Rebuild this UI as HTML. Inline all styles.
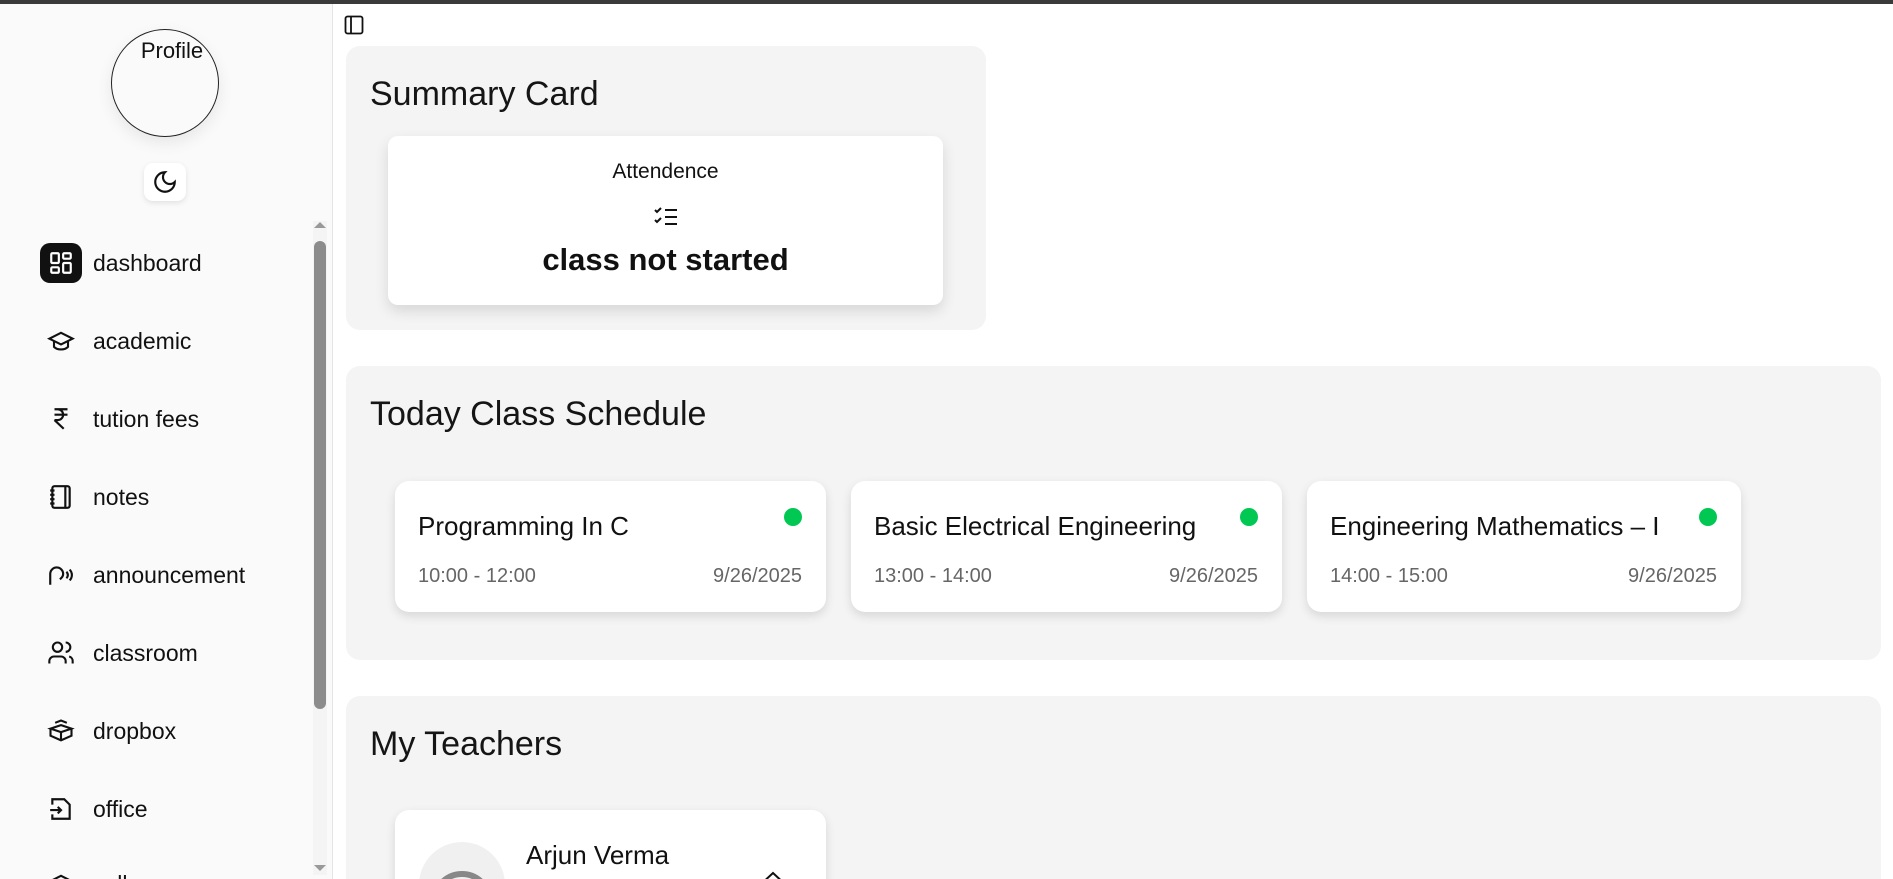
<!DOCTYPE html>
<html style="width:1893px;height:879px;overflow:hidden"><head><meta charset="utf-8"><style>
*{box-sizing:border-box;margin:0;padding:0}
body{width:1893px;height:879px;overflow:hidden;background:#fff;font-family:"Liberation Sans",sans-serif;color:#111;position:relative}
.topbar{position:absolute;left:0;top:0;width:1893px;height:4px;background:#3a3a3a}
.side{position:absolute;left:0;top:4px;width:333px;height:875px;background:#fafafa;border-right:1px solid #e4e4e4;overflow:hidden}
.avatar{position:absolute;left:111px;top:25px;width:108px;height:108px;border-radius:50%;border:1px solid #222;box-shadow:0 6px 16px rgba(0,0,0,.08);font-size:22px;text-align:center;padding-top:8px;padding-left:14px}
.moon{position:absolute;left:144px;top:159px;width:42px;height:38px;border-radius:9px;background:#fff;box-shadow:0 2px 6px rgba(0,0,0,.1);display:flex;align-items:center;justify-content:center}
.nav{position:absolute;left:40px;top:0}
.item{position:absolute;left:0;height:40px;display:flex;align-items:center;font-size:23px;font-weight:500;white-space:nowrap}
.item .ic{width:42px;height:40px;display:flex;align-items:center;justify-content:center;margin-right:11px}
.sb{position:absolute;left:313px;width:14px;height:654px;background:#f4f4f4}
.thumb{position:absolute;left:314px;width:12px;height:468px;border-radius:6px;background:#8c8c8c}
.panel{position:absolute;background:#f4f4f4;border-radius:14px;overflow:hidden}
h2{position:absolute;font-size:34px;font-weight:500;color:#151515}
.card{position:absolute;background:#fff;border-radius:14px;box-shadow:0 4px 10px rgba(0,0,0,.12)}
.sc .t{position:absolute;left:23px;top:30px;font-size:26px;font-weight:500}
.sc .d{position:absolute;right:24px;top:27px;width:18px;height:18px;border-radius:50%;background:#00c853}
.sc .a{position:absolute;left:23px;top:84px;font-size:20px;color:#666}
.sc .b{position:absolute;right:24px;top:84px;font-size:20px;color:#666}
</style></head><body>
<div class="topbar"></div>
<div class="side">
 <div class="avatar">Profile</div>
 <div class="moon"><svg width="26" height="26" viewBox="0 0 24 24" fill="none" stroke="#111" stroke-width="2" stroke-linecap="round"><path d="M12 3a6 6 0 0 0 9 9 9 9 0 1 1-9-9z"/></svg></div>
 <div class="nav">
  <div class="item" style="top:239px"><div class="ic" style="background:#111;border-radius:10px"><svg width="26" height="26" viewBox="0 0 24 24" fill="none" stroke="#fff" stroke-width="2"><rect x="3" y="3" width="7" height="9" rx="1"/><rect x="14" y="3" width="7" height="5" rx="1"/><rect x="14" y="12" width="7" height="9" rx="1"/><rect x="3" y="16" width="7" height="5" rx="1"/></svg></div>dashboard</div>
  <div class="item" style="top:317px"><div class="ic"><svg width="28" height="28" viewBox="0 0 24 24" fill="none" stroke="#111" stroke-width="1.8"><path d="M2 10l10-5 10 5-10 5z"/><path d="M6 12v5c3 3 9 3 12 0v-5"/></svg></div>academic</div>
  <div class="item" style="top:395px"><div class="ic"><svg width="26" height="26" viewBox="0 0 24 24" fill="none" stroke="#111" stroke-width="2"><path d="M6 3h12M6 8h12M6 13l8.5 8M6 13h3a5 5 0 0 0 0-10"/></svg></div>tution fees</div>
  <div class="item" style="top:473px"><div class="ic"><svg width="26" height="26" viewBox="0 0 24 24" fill="none" stroke="#111" stroke-width="2"><rect x="4" y="2" width="16" height="20" rx="2"/><path d="M2 6h4M2 10h4M2 14h4M2 18h4M16 2v20"/></svg></div>notes</div>
  <div class="item" style="top:551px"><div class="ic"><svg width="28" height="26" viewBox="0 0 26 24" fill="none" stroke="#111" stroke-width="2"><path d="M3 21v-10a6 6 0 0 1 12 0c0 3-2 4-3 5"/><path d="M18 9a4 4 0 0 1 0 6M21 7a7 7 0 0 1 0 10"/></svg></div>announcement</div>
  <div class="item" style="top:629px"><div class="ic"><svg width="28" height="28" viewBox="0 0 24 24" fill="none" stroke="#111" stroke-width="1.8"><circle cx="9" cy="7" r="4"/><path d="M2 21v-2a4 4 0 0 1 4-4h6a4 4 0 0 1 4 4v2M16 3a4 4 0 0 1 0 8M22 21v-2a4 4 0 0 0-3-4"/></svg></div>classroom</div>
  <div class="item" style="top:707px"><div class="ic"><svg width="28" height="28" viewBox="0 0 24 24" fill="none" stroke="#111" stroke-width="1.8"><path d="M12 7L3 10l9 3 9-3zM3 10v6l9 4 9-4v-6M12 13v7M7 5l5-2 5 2"/></svg></div>dropbox</div>
  <div class="item" style="top:785px"><div class="ic"><svg width="26" height="26" viewBox="0 0 24 24" fill="none" stroke="#111" stroke-width="2"><path d="M4 8V3h11l5 5v13H4v-4M2 13h10M9 10l3 3-3 3"/></svg></div>office</div>
  <div class="item" style="top:860px"><div class="ic"><svg width="28" height="28" viewBox="0 0 24 24" fill="none" stroke="#111" stroke-width="1.8"><path d="M2 10l10-5 10 5"/></svg></div>college</div>
 </div>
 <div class="sb" style="top:217px"></div>
 <div class="thumb" style="top:237px"></div>
 <svg style="position:absolute;left:313px;top:216px" width="14" height="10"><path d="M1 8L7 2l6 6z" fill="#999"/></svg>
 <svg style="position:absolute;left:313px;top:859px" width="14" height="10"><path d="M1 2l6 6 6-6z" fill="#999"/></svg>
</div>

<svg style="position:absolute;left:344px;top:15px" width="20" height="20" viewBox="0 0 20 20" fill="none" stroke="#111" stroke-width="1.8"><rect x="1.5" y="1.5" width="17" height="17" rx="2"/><path d="M7 2v16"/></svg>

<div class="panel" style="left:346px;top:46px;width:640px;height:284px;overflow:visible">
 <h2 style="left:24px;top:29px">Summary Card</h2>
 <div class="card" style="left:42px;top:90px;width:555px;height:169px;border-radius:10px;box-shadow:0 6px 14px rgba(0,0,0,.12)">
  <div style="position:absolute;left:0;width:100%;top:24px;text-align:center;font-size:21px;font-weight:500">Attendence</div>
  <svg style="position:absolute;left:265px;top:70px" width="26" height="22" viewBox="0 0 26 22" fill="none" stroke="#111" stroke-width="2"><path d="M2 4l2 2 4-4M2 14l2 2 4-4M12 4h12M12 11h12M12 18h12"/></svg>
  <div style="position:absolute;left:0;width:100%;top:106px;text-align:center;font-size:31px;font-weight:bold">class not started</div>
 </div>
</div>

<div class="panel" style="left:346px;top:366px;width:1535px;height:294px;overflow:visible">
 <h2 style="left:24px;top:29px">Today Class Schedule</h2>
 <div class="card sc" style="left:49px;top:115px;width:431px;height:131px"><div class="t">Programming In C</div><div class="d"></div><div class="a">10:00 - 12:00</div><div class="b">9/26/2025</div></div>
 <div class="card sc" style="left:505px;top:115px;width:431px;height:131px"><div class="t">Basic Electrical Engineering</div><div class="d"></div><div class="a">13:00 - 14:00</div><div class="b">9/26/2025</div></div>
 <div class="card sc" style="left:961px;top:115px;width:434px;height:131px"><div class="t">Engineering Mathematics – I</div><div class="d"></div><div class="a">14:00 - 15:00</div><div class="b">9/26/2025</div></div>
</div>

<div class="panel" style="left:346px;top:696px;width:1535px;height:183px;border-radius:14px 14px 0 0">
 <h2 style="left:24px;top:29px">My Teachers</h2>
 <div class="card" style="left:49px;top:114px;width:431px;height:120px">
  <div style="position:absolute;left:24px;top:32px;width:86px;height:86px;border-radius:50%;background:#f0f0f0;overflow:hidden">
   <svg width="86" height="86" viewBox="0 0 86 86" fill="none" stroke="#888" stroke-width="6"><circle cx="43" cy="60" r="28"/><circle cx="43" cy="60" r="14"/></svg>
  </div>
  <div style="position:absolute;left:131px;top:30px;font-size:26px;font-weight:500">Arjun Verma</div>
  <svg style="position:absolute;left:360px;top:58px" width="36" height="20" viewBox="0 0 36 20" fill="none" stroke="#111" stroke-width="2"><path d="M4 18L18 5l14 13"/></svg>
 </div>
</div>
</body></html>
